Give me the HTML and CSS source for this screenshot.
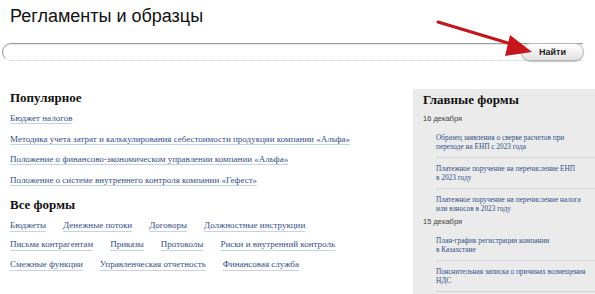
FILE: index.html
```html
<!DOCTYPE html>
<html lang="ru">
<head>
<meta charset="utf-8">
<title>Регламенты и образцы</title>
<link rel="stylesheet" href="styles.css">
</head>
<body>
<div class="page">
  <h1 class="title">Регламенты и образцы</h1>
  <div class="search">
    <div class="search-input"></div>
    <button class="search-btn">Найти</button>
  </div>
  <svg class="arrow" width="120" height="50" viewBox="0 0 120 50">
    <line x1="4" y1="3" x2="84" y2="27" stroke="#c4161c" stroke-width="3" stroke-linecap="round"/>
    <polygon points="76,16 98,33 71,37" fill="#c4161c"/>
  </svg>
  <div class="main">
    <div class="content">
      <h2 class="h2">Популярное</h2>
      <ul class="popular">
        <li><a class="lnk">Бюджет налогов</a></li>
        <li><a class="lnk">Методика учета затрат и калькулирования себестоимости продукции компании «Альфа»</a></li>
        <li><a class="lnk">Положение о финансово-экономическом управлении компании «Альфа»</a></li>
        <li><a class="lnk">Положение о системе внутреннего контроля компании «Гефест»</a></li>
      </ul>
      <h2 class="h2 h2-all">Все формы</h2>
      <div class="cats">
        <div class="cat-row"><a class="lnk">Бюджеты</a><a class="lnk">Денежные потоки</a><a class="lnk">Договоры</a><a class="lnk">Должностные инструкции</a></div>
        <div class="cat-row"><a class="lnk">Письма контрагентам</a><a class="lnk">Приказы</a><a class="lnk">Протоколы</a><a class="lnk">Риски и внутренний контроль</a></div>
        <div class="cat-row"><a class="lnk">Смежные функции</a><a class="lnk">Управленческая отчетность</a><a class="lnk">Финансовая служба</a></div>
      </div>
    </div>
    <aside class="side">
      <h2 class="h2 side-title">Главные формы</h2>
      <div class="date">16 декабря</div>
      <ul class="forms forms-first">
        <li><a class="slnk">Образец заявления о сверке расчетов при переходе на ЕНП с 2023 года</a></li>
        <li><a class="slnk">Платежное поручение на перечисление ЕНП<br>в 2023 году</a></li>
        <li><a class="slnk">Платежное поручение на перечисление налога или взносов в 2023 году</a></li>
      </ul>
      <div class="date">15 декабря</div>
      <ul class="forms forms-second">
        <li><a class="slnk">План-график регистрации компании<br>в Казахстане</a></li>
        <li><a class="slnk">Пояснительная записка о причинах возмещения НДС</a></li>
      </ul>
    </aside>
  </div>
</div>
</body>
</html>
```

FILE: styles.css
```css
* { box-sizing: border-box; }
html, body { margin: 0; padding: 0; background: #fff; }
body { width: 595px; height: 294px; overflow: hidden; }
.page { position: relative; padding: 4px 0 0 0; }
.title {
  margin: 0 0 0 10px;
  font: 18px/24px "Liberation Sans", Arial, sans-serif;
  color: #111;
  font-weight: normal;
}
.search {
  position: relative;
  margin: 15px 12px 0 2px;
  height: 18px;
}
.search-input {
  height: 18px;
  border: 1px solid #9a9a9a;
  border-right: none;
  border-bottom: 1px dotted #cfcfcf;
  border-radius: 9px 0 0 9px;
  background: #fff;
  box-shadow: inset 0 1px 1px #e8e8e8;
}
.search-btn {
  position: absolute;
  right: -1px;
  top: 0;
  width: 63px;
  height: 18px;
  border: 1px solid #b8b8b8;
  border-radius: 9px;
  background: linear-gradient(#ffffff, #e2e2e2);
  box-shadow: 0 1px 1px #c0c0c0;
  font: bold 9px/16px "Liberation Sans", Arial, sans-serif;
  color: #222;
  padding: 0;
}
.arrow { position: absolute; left: 434px; top: 19px; }
.main { display: flex; margin-top: 28px; height: 205px; }
.content { width: 413px; padding-left: 10px; }
.h2 {
  margin: 0;
  font: bold 13px/18px "Liberation Serif", "Times New Roman", serif;
  color: #111;
}
.popular { list-style: none; margin: 1px 0 0; padding: 0; }
.popular li { font-size: 9px; line-height: 20.5px; height: 20.5px; }
.lnk {
  font: 9px/11px "Liberation Serif", "Times New Roman", serif;
  color: #32508a;
  text-decoration: none;
  border-bottom: 1px solid #c3d3ea;
}
.h2-all { margin-top: 6px; }
.cats { margin-top: 2px; }
.cat-row { display: flex; align-items: center; gap: 17px; height: 19.5px; }
.side {
  flex: 1;
  background: #ebebeb;
  padding: 2px 0 0 10px;
}
.date {
  font: 7.5px/10px "Liberation Sans", Arial, sans-serif;
  color: #444;
  margin-top: 5px;
}
.forms { list-style: none; margin: 3px 0 0 13px; padding: 0; }
.forms li { padding: 6px 0; }
.forms-first li + li { border-top: 1px solid #d4d4d4; }
.forms-first li:last-child { padding-bottom: 4px; }
.forms-second li { border-bottom: 1px solid #d4d4d4; }
.forms-first + .date { margin-top: 0; }
.slnk {
  display: block;
  width: 150px;
  font: 7.3px/9px "Liberation Serif", "Times New Roman", serif;
  color: #32508a;
  text-decoration: none;
}
```
